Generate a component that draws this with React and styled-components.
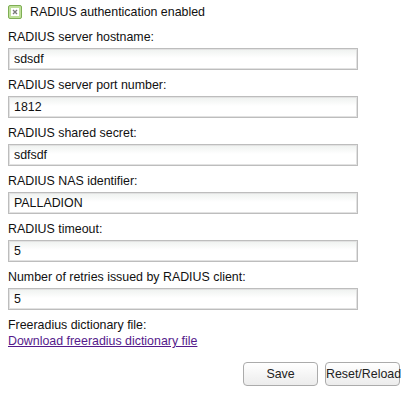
import React from 'react';
import styled, { createGlobalStyle } from 'styled-components';

const GlobalStyle = createGlobalStyle`
  body {
    margin: 0;
    background: #ffffff;
    font-family: "Liberation Sans", Arial, sans-serif;
    font-size: 12.4px;
    color: #111;
  }
`;

const Form = styled.div`
  width: 411px;
  padding: 4px 0 0 8px;
  box-sizing: border-box;
`;

const CheckRow = styled.label`
  display: flex;
  align-items: center;
  gap: 8px;
  height: 16px;
  margin-bottom: 9px;
`;

const CheckBox = styled.span`
  width: 14px;
  height: 14px;
  box-sizing: border-box;
  border: 1px solid #7fae55;
  border-radius: 2px;
  background: #bfe09a;
  display: flex;
  align-items: center;
  justify-content: center;
  svg {
    display: block;
  }
`;

const Field = styled.div`
  display: flex;
  flex-direction: column;
  gap: 3px;
  margin-bottom: 7px;
`;

const Label = styled.div`
  line-height: 16px;
  height: 16px;
`;

const Input = styled.input`
  width: 350px;
  height: 22px;
  box-sizing: border-box;
  border: 1px solid #bdbdbd;
  box-shadow: inset 0 0 0 1px #e2e2e2;
  background: linear-gradient(#eef1ef 0px, #ffffff 9px, #ffffff 100%);
  padding: 0 5px;
  font-family: "Liberation Sans", Arial, sans-serif;
  font-size: 12.4px;
  color: #111;
  outline: none;
`;

const DownloadLink = styled.a`
  display: block;
  line-height: 16px;
  color: #551a8b;
  text-decoration: underline;
`;

const Actions = styled.div`
  display: flex;
  justify-content: flex-end;
  gap: 7px;
  padding-right: 11px;
  margin-top: 13px;
`;

const Button = styled.button`
  width: ${p => p.$w}px;
  height: 24px;
  box-sizing: border-box;
  border: 1px solid #ababab;
  border-radius: 4px;
  background: linear-gradient(#ffffff, #ececec);
  font-family: "Liberation Sans", Arial, sans-serif;
  font-size: 12.4px;
  color: #222;
  padding: 0;
  cursor: pointer;
`;

const fields = [
  ['RADIUS server hostname:', 'sdsdf'],
  ['RADIUS server port number:', '1812'],
  ['RADIUS shared secret:', 'sdfsdf'],
  ['RADIUS NAS identifier:', 'PALLADION'],
  ['RADIUS timeout:', '5'],
  ['Number of retries issued by RADIUS client:', '5'],
];

export default function App() {
  return (
    <>
      <GlobalStyle />
      <Form>
        <CheckRow>
          <CheckBox>
            <svg width="8" height="8" viewBox="0 0 8 8">
              <rect x="0" y="0" width="8" height="8" fill="#fff" />
              <path d="M2 2 L6 6 M6 2 L2 6" stroke="#7a7a7a" strokeWidth="1.4" />
            </svg>
          </CheckBox>
          RADIUS authentication enabled
        </CheckRow>
        {fields.map(([label, value]) => (
          <Field key={label}>
            <Label>{label}</Label>
            <Input defaultValue={value} />
          </Field>
        ))}
        <Label>Freeradius dictionary file:</Label>
        <DownloadLink href="#">Download freeradius dictionary file</DownloadLink>
        <Actions>
          <Button $w={75}>Save</Button>
          <Button $w={75}>Reset/Reload</Button>
        </Actions>
      </Form>
    </>
  );
}
